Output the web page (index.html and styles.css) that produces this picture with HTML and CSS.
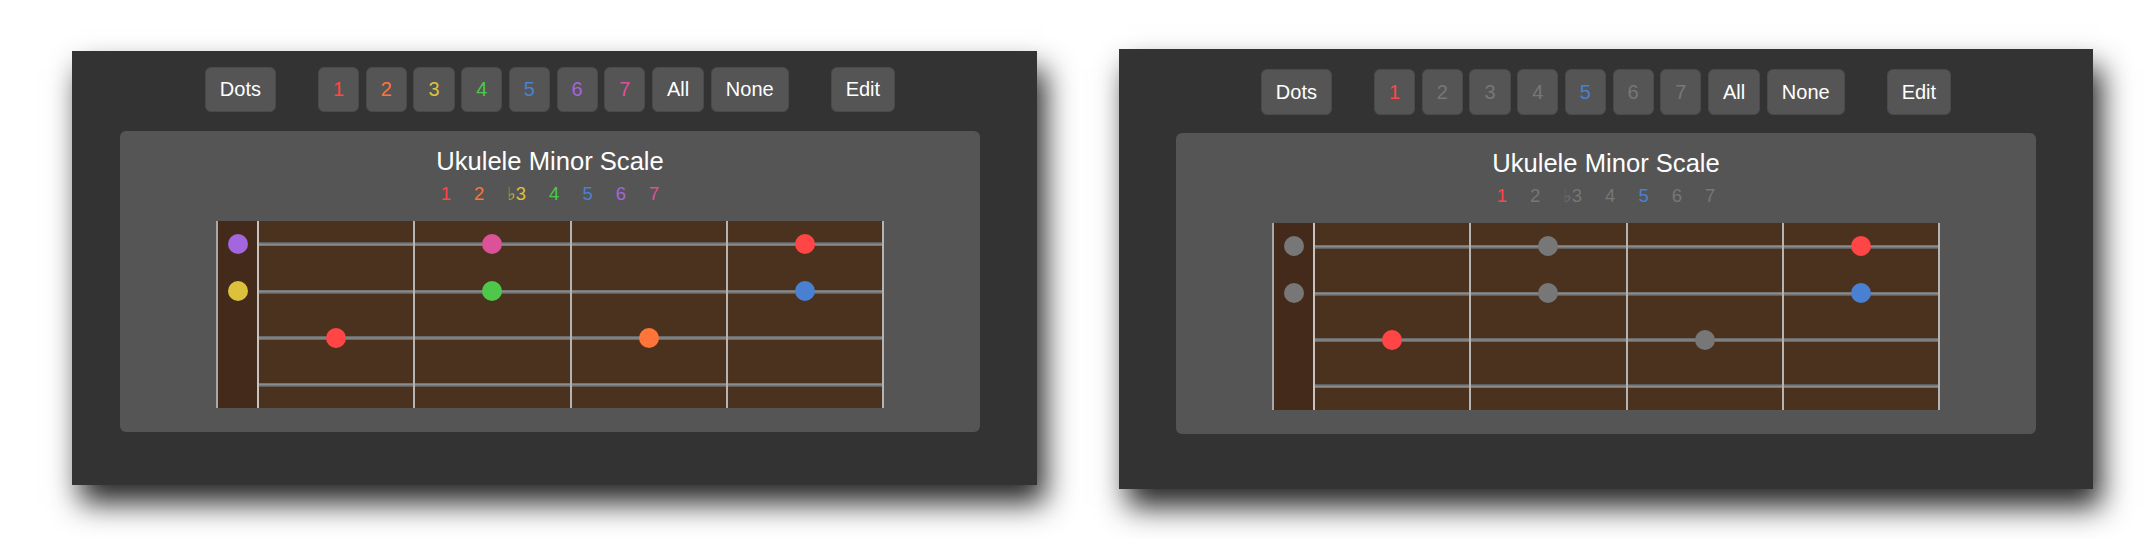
FILE: index.html
```html
<!DOCTYPE html>
<html lang="en">
<head>
<meta charset="utf-8">
<title>Ukulele Minor Scale</title>
<link rel="stylesheet" href="styles.css">
</head>
<body>
<div class="page">
  <section class="panel panel--a">
    <div class="column">
      <div class="toolbar">
        <button class="btn">Dots</button>
        <div class="btn-group">
          <button class="btn c1">1</button>
          <button class="btn c2">2</button>
          <button class="btn c3">3</button>
          <button class="btn c4">4</button>
          <button class="btn c5">5</button>
          <button class="btn c6">6</button>
          <button class="btn c7">7</button>
          <button class="btn">All</button>
          <button class="btn">None</button>
        </div>
        <button class="btn">Edit</button>
      </div>
      <div class="card">
        <h1 class="title">Ukulele Minor Scale</h1>
        <div class="degrees">
          <span class="c1">1</span>
          <span class="c2">2</span>
          <span class="c3"><span class="flat">♭</span>3</span>
          <span class="c4">4</span>
          <span class="c5">5</span>
          <span class="c6">6</span>
          <span class="c7">7</span>
        </div>
        <div class="fretboard">
          <div class="nut">
            <div class="row"><span class="dot d6"></span></div>
            <div class="row"><span class="dot d3"></span></div>
            <div class="row"></div>
            <div class="row"></div>
          </div>
          <div class="fret">
            <div class="row"></div>
            <div class="row"></div>
            <div class="row"><span class="dot d1"></span></div>
            <div class="row"></div>
          </div>
          <div class="fret">
            <div class="row"><span class="dot d7"></span></div>
            <div class="row"><span class="dot d4"></span></div>
            <div class="row"></div>
            <div class="row"></div>
          </div>
          <div class="fret">
            <div class="row"></div>
            <div class="row"></div>
            <div class="row"><span class="dot d2"></span></div>
            <div class="row"></div>
          </div>
          <div class="fret">
            <div class="row"><span class="dot d1"></span></div>
            <div class="row"><span class="dot d5"></span></div>
            <div class="row"></div>
            <div class="row"></div>
          </div>
        </div>
      </div>
    </div>
  </section>

  <section class="panel panel--b">
    <div class="column">
      <div class="toolbar">
        <button class="btn">Dots</button>
        <div class="btn-group">
          <button class="btn c1">1</button>
          <button class="btn off">2</button>
          <button class="btn off">3</button>
          <button class="btn off">4</button>
          <button class="btn c5">5</button>
          <button class="btn off">6</button>
          <button class="btn off">7</button>
          <button class="btn">All</button>
          <button class="btn">None</button>
        </div>
        <button class="btn">Edit</button>
      </div>
      <div class="card">
        <h1 class="title">Ukulele Minor Scale</h1>
        <div class="degrees">
          <span class="c1">1</span>
          <span class="off">2</span>
          <span class="off"><span class="flat">♭</span>3</span>
          <span class="off">4</span>
          <span class="c5">5</span>
          <span class="off">6</span>
          <span class="off">7</span>
        </div>
        <div class="fretboard">
          <div class="nut">
            <div class="row"><span class="dot doff"></span></div>
            <div class="row"><span class="dot doff"></span></div>
            <div class="row"></div>
            <div class="row"></div>
          </div>
          <div class="fret">
            <div class="row"></div>
            <div class="row"></div>
            <div class="row"><span class="dot d1"></span></div>
            <div class="row"></div>
          </div>
          <div class="fret">
            <div class="row"><span class="dot doff"></span></div>
            <div class="row"><span class="dot doff"></span></div>
            <div class="row"></div>
            <div class="row"></div>
          </div>
          <div class="fret">
            <div class="row"></div>
            <div class="row"></div>
            <div class="row"><span class="dot doff"></span></div>
            <div class="row"></div>
          </div>
          <div class="fret">
            <div class="row"><span class="dot d1"></span></div>
            <div class="row"><span class="dot d5"></span></div>
            <div class="row"></div>
            <div class="row"></div>
          </div>
        </div>
      </div>
    </div>
  </section>
</div>
</body>
</html>
```

FILE: styles.css
```css
* { box-sizing: border-box; }

html, body {
  margin: 0;
  padding: 0;
  background: #ffffff;
  font-family: "Liberation Sans", Arial, "DejaVu Sans", sans-serif;
}

.page {
  width: 2154px;
  height: 539px;
  display: flex;
  align-items: flex-start;
  gap: 82px;
  padding-left: 72px;
  overflow: hidden;
}

.panel {
  background: #333333;
  box-shadow: 8px 18px 28px rgba(0, 0, 0, 0.85);
}

.panel--a {
  width: 965px;
  height: 434px;
  margin-top: 51px;
  padding: 16px 0 0 48px;
}

.panel--b {
  width: 974px;
  height: 440px;
  margin-top: 49px;
  padding: 20px 0 0 57px;
}

.column {
  width: 860px;
  display: flex;
  flex-direction: column;
}

.toolbar {
  display: flex;
  justify-content: center;
  align-items: center;
  gap: 42px;
  height: 45px;
  margin-bottom: 19px;
}

.panel--b .toolbar {
  height: 46px;
  margin-bottom: 18px;
}

.btn-group {
  display: flex;
  gap: 6.6px;
  height: 100%;
}

.toolbar > .btn { height: 100%; }
.btn-group .btn { height: 100%; }

.btn {
  display: flex;
  align-items: center;
  justify-content: center;
  padding: 0 14px;
  border: 1px solid #4a4a4a;
  border-radius: 6px;
  background: #555555;
  color: #ffffff;
  font-family: "Liberation Sans", Arial, sans-serif;
  font-size: 20px;
  line-height: 23px;
  cursor: pointer;
}

.card {
  width: 860px;
  height: 301px;
  background: #555555;
  border-radius: 6px;
  padding-top: 15px;
  display: flex;
  flex-direction: column;
  align-items: center;
}

.title {
  margin: 0;
  font-weight: normal;
  font-size: 25.6px;
  line-height: 30px;
  height: 30px;
  color: #ffffff;
}

.degrees {
  margin-top: 7px;
  display: flex;
  gap: 23px;
  font-size: 18.5px;
  line-height: 22px;
  height: 22px;
}

.flat {
  font-family: "DejaVu Sans", sans-serif;
  font-size: 18px;
  opacity: 0.8;
}

.c1 { color: #ff4545; }
.c2 { color: #ff7438; }
.c3 { color: #dcc23c; }
.c4 { color: #4ec84a; }
.c5 { color: #4a80d2; }
.c6 { color: #a366de; }
.c7 { color: #dc5298; }
.off { color: #777777; }

.fretboard {
  margin-top: 16px;
  width: 668px;
  height: 187px;
  display: flex;
  background: #4a321e;
}

.nut {
  width: 43px;
  background: #432a1b;
  border-left: 2px solid #a8a8a8;
  border-right: 2px solid #c4c4c4;
  display: flex;
  flex-direction: column;
}

.fret {
  flex: 1;
  border-right: 2px solid #b4b4b4;
  display: flex;
  flex-direction: column;
}

.row {
  flex: 1;
  display: flex;
  align-items: center;
  justify-content: center;
}

.fret .row {
  background: linear-gradient(to bottom,
    transparent calc(50% - 2px),
    #5f5f5f calc(50% - 2px),
    #8c8c8c 50%,
    #5f5f5f calc(50% + 2px),
    transparent calc(50% + 2px));
}

.dot {
  width: 20px;
  height: 20px;
  border-radius: 50%;
}

.d1 { background: #ff4545; }
.d2 { background: #ff7438; }
.d3 { background: #dcc23c; }
.d4 { background: #4ec84a; }
.d5 { background: #4a80d2; }
.d6 { background: #a366de; }
.d7 { background: #dc5298; }
.doff { background: #777777; }
```
